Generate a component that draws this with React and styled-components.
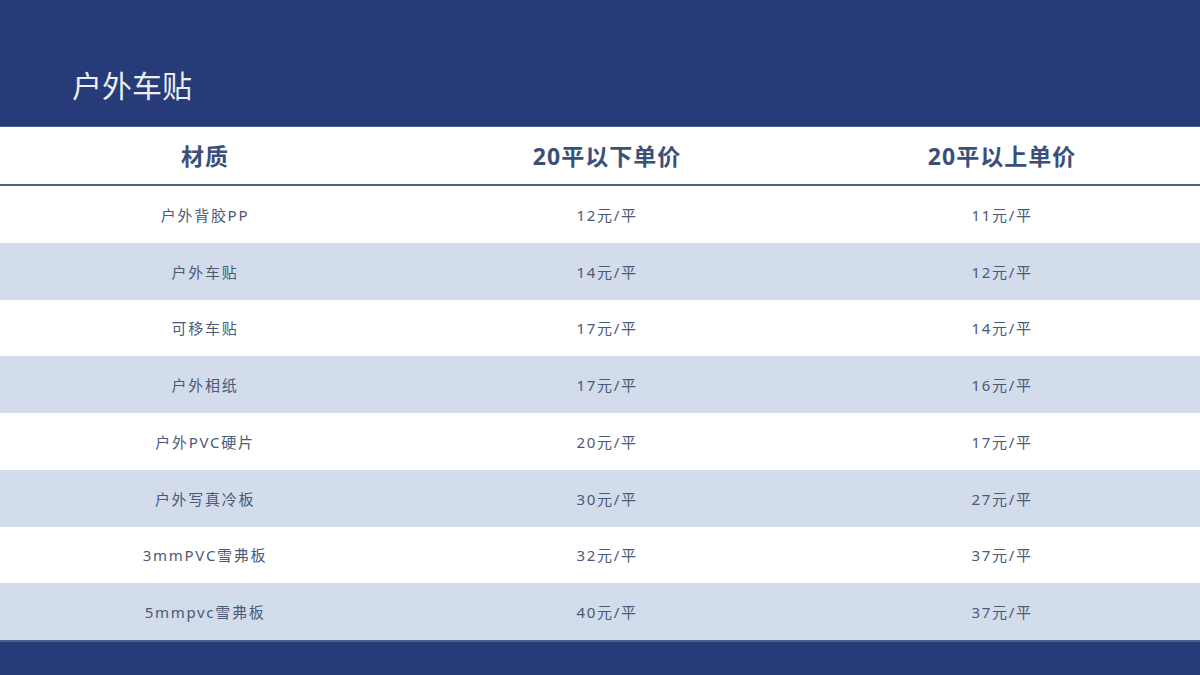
import React from 'react';
import styled, { createGlobalStyle } from 'styled-components';

const GlobalStyle = createGlobalStyle`
  html, body {
    margin: 0;
    padding: 0;
    background: #ffffff;
  }
  body {
    font-family: "Noto Sans", "Noto Sans CJK SC", sans-serif;
  }
`;

const Page = styled.div`
  width: 1200px;
  height: 675px;
  display: flex;
  flex-direction: column;
  overflow: hidden;
`;

const Banner = styled.header`
  height: 127px;
  flex: none;
  background: #263b77;
  border-bottom: 1px solid #4b5f8f;
  display: flex;
  align-items: center;
  padding: 42px 0 0 72px;
  box-sizing: border-box;
`;

const Title = styled.h1`
  margin: 0;
  font-size: 30px;
  font-weight: 400;
  color: #eceef4;
  letter-spacing: 0;
`;

const Table = styled.div`
  flex: none;
  display: flex;
  flex-direction: column;
`;

const HeadRow = styled.div`
  height: 59px;
  display: grid;
  grid-template-columns: 1fr 1fr 1fr;
  align-items: center;
  border-bottom: 2px solid #4e6287;
  box-sizing: border-box;
  padding-bottom: 2px;
`;

const HeadCell = styled.div`
  text-align: center;
  font-size: 23px;
  font-weight: 700;
  letter-spacing: 1px;
  color: #3b5079;
  padding-left: ${p => p.shift || 0}px;
`;

const Row = styled.div`
  height: 56.75px;
  display: grid;
  grid-template-columns: 1fr 1fr 1fr;
  align-items: center;
  background: ${p => (p.shaded ? '#d3dcea' : '#ffffff')};
`;

const Cell = styled.div`
  text-align: center;
  font-size: 15px;
  color: #4b5a78;
  letter-spacing: 1.7px;
  padding-left: ${p => p.shift || 0}px;
`;

const Footer = styled.footer`
  flex: 1;
  background: #263b77;
  border-top: 2px solid #4b5f8f;
`;

const rows = [
  ['户外背胶PP', '12元/平', '11元/平'],
  ['户外车贴', '14元/平', '12元/平'],
  ['可移车贴', '17元/平', '14元/平'],
  ['户外相纸', '17元/平', '16元/平'],
  ['户外PVC硬片', '20元/平', '17元/平'],
  ['户外写真冷板', '30元/平', '27元/平'],
  ['3mmPVC雪弗板', '32元/平', '37元/平'],
  ['5mmpvc雪弗板', '40元/平', '37元/平'],
];

export default function App() {
  return (
    <Page>
      <GlobalStyle />
      <Banner>
        <Title>户外车贴</Title>
      </Banner>
      <Table>
        <HeadRow>
          <HeadCell shift={10}>材质</HeadCell>
          <HeadCell shift={14}>20平以下单价</HeadCell>
          <HeadCell shift={4}>20平以上单价</HeadCell>
        </HeadRow>
        {rows.map((r, i) => (
          <Row key={r[0]} shaded={i % 2 === 1}>
            <Cell shift={10}>{r[0]}</Cell>
            <Cell shift={14}>{r[1]}</Cell>
            <Cell shift={4}>{r[2]}</Cell>
          </Row>
        ))}
      </Table>
      <Footer />
    </Page>
  );
}
